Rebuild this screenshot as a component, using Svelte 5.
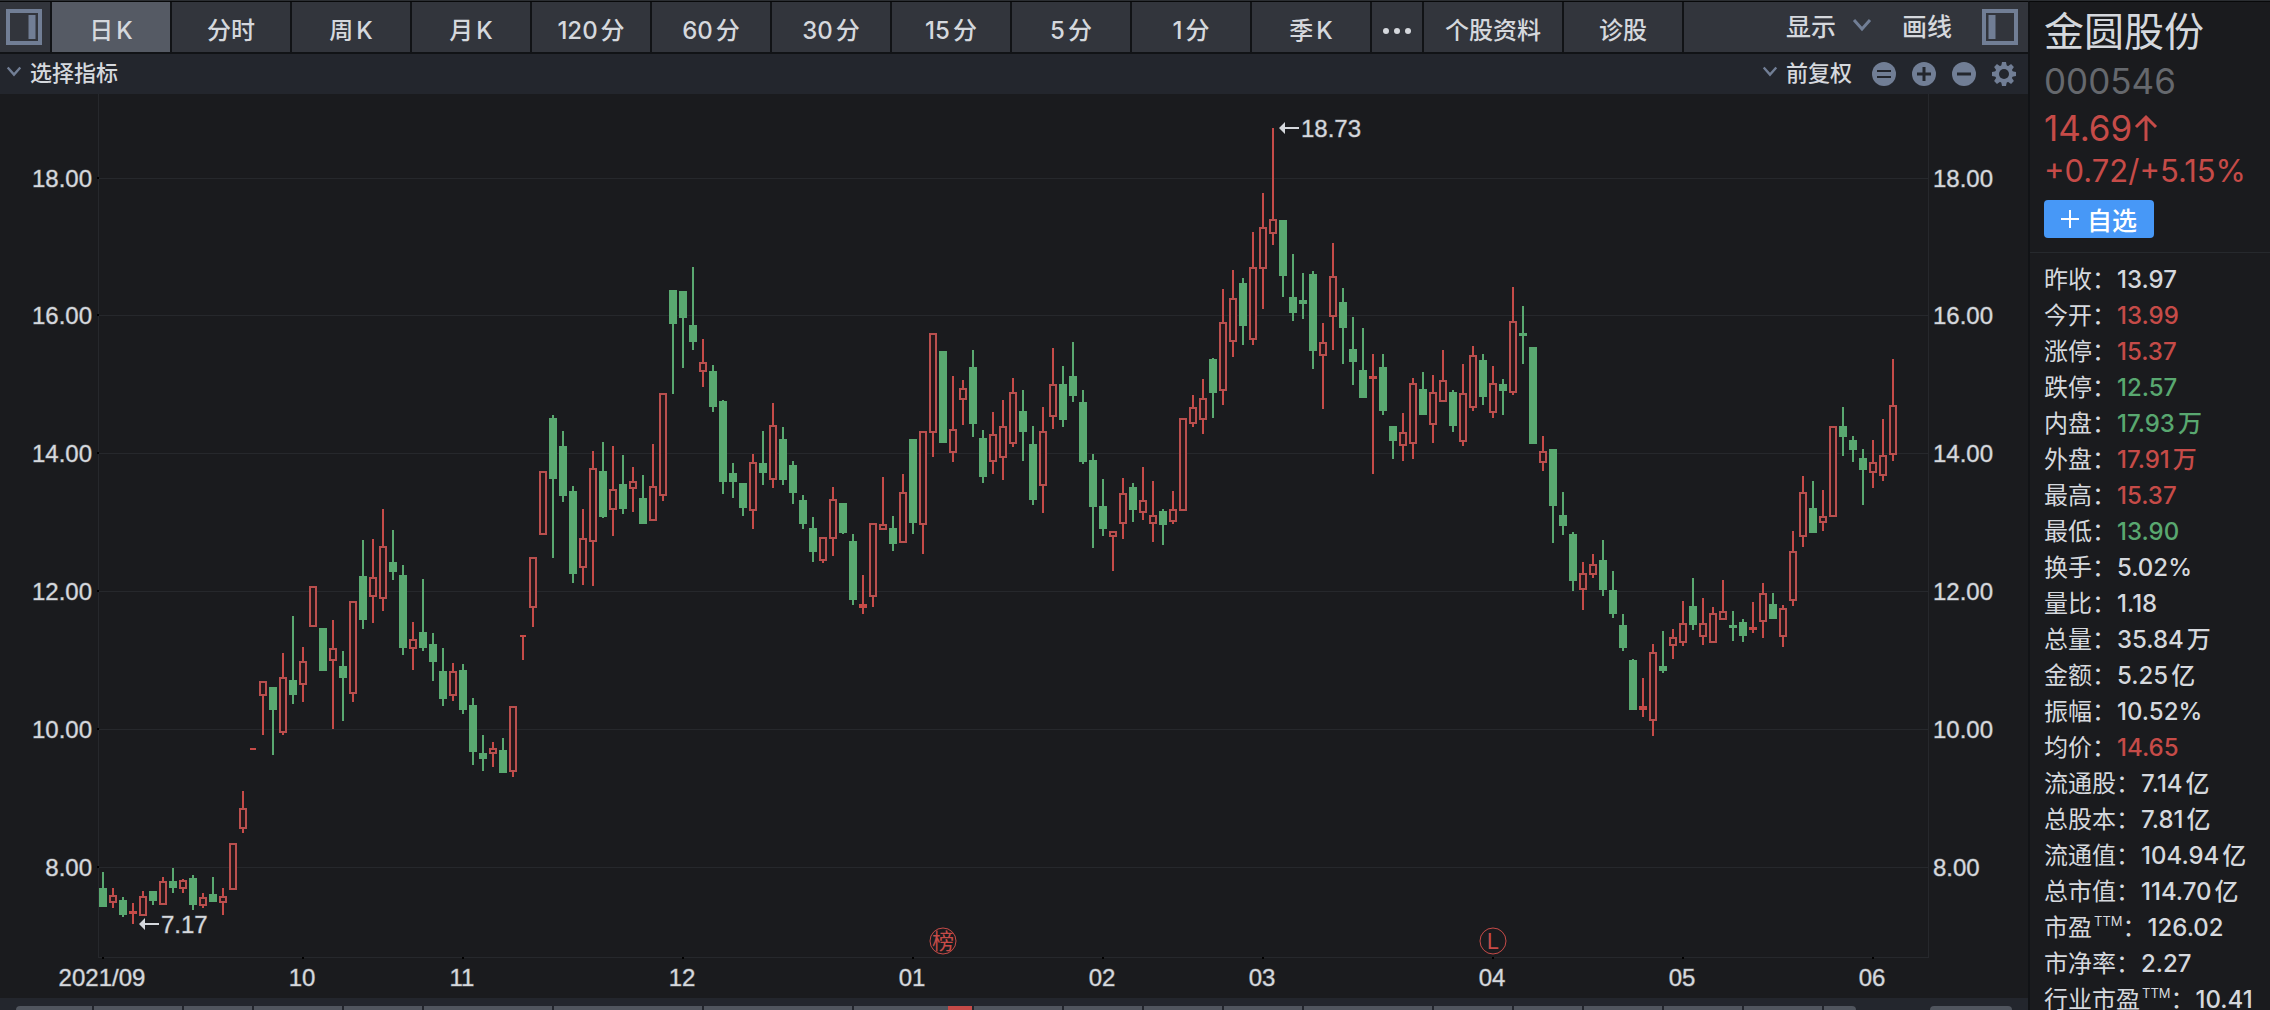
<script>
  const periods = ['日K', '分时', '周K', '月K', '120分', '60分', '30分', '15分', '5分', '1分', '季K'];
  let active = $state('日K');

  const quotes = [
    { label: '昨收', value: '13.97' },
    { label: '今开', value: '13.99', tone: 'up' },
    { label: '涨停', value: '15.37', tone: 'up' },
    { label: '跌停', value: '12.57', tone: 'down' },
    { label: '内盘', value: '17.93', unit: '万', tone: 'down' },
    { label: '外盘', value: '17.91', unit: '万', tone: 'up' },
    { label: '最高', value: '15.37', tone: 'up' },
    { label: '最低', value: '13.90', tone: 'down' },
    { label: '换手', value: '5.02%' },
    { label: '量比', value: '1.18' },
    { label: '总量', value: '35.84', unit: '万' },
    { label: '金额', value: '5.25', unit: '亿' },
    { label: '振幅', value: '10.52%' },
    { label: '均价', value: '14.65', tone: 'up' },
    { label: '流通股', value: '7.14', unit: '亿' },
    { label: '总股本', value: '7.81', unit: '亿' },
    { label: '流通值', value: '104.94', unit: '亿' },
    { label: '总市值', value: '114.70', unit: '亿' },
    { label: '市盈', ttm: true, value: '126.02' },
    { label: '市净率', value: '2.27' },
    { label: '行业市盈', ttm: true, value: '10.41' }
  ];

  const grid = [
    { text: '18.00', y: 178 },
    { text: '16.00', y: 315 },
    { text: '14.00', y: 453 },
    { text: '12.00', y: 591 },
    { text: '10.00', y: 729 },
    { text: '8.00', y: 867 }
  ];

  const months = [
    { text: '2021/09', x: 103 },
    { text: '10', x: 303 },
    { text: '11', x: 463 },
    { text: '12', x: 683 },
    { text: '01', x: 913 },
    { text: '02', x: 1103 },
    { text: '03', x: 1263 },
    { text: '04', x: 1493 },
    { text: '05', x: 1683 },
    { text: '06', x: 1873 }
  ];

  // One candle per entry: direction, high, body top, body bottom, low
  const series = `
    g872,888,907,907 r888,895,903,908 g897,900,915,917 r903,911,914,924 r891,896,916,916
    g891,891,901,905 r877,881,905,905 g868,881,888,893 r879,880,889,893 g875,878,905,910
    r893,897,906,908 g877,894,902,902 r888,896,903,915 r843,843,890,890 r791,808,829,833
    r748,748,750,750 r681,681,696,735 g687,687,710,755 r653,677,733,735 g616,680,695,704
    r647,661,685,702 r586,586,627,627 g628,628,671,671 r620,648,661,729 g651,666,678,721
    r601,601,694,702 g540,576,620,629 r539,577,597,623 r509,546,599,611 g530,562,572,580
    g565,575,648,655 r622,639,649,670 g579,632,648,651 g633,644,662,681 g648,671,699,706
    r663,671,696,701 g664,670,710,714 g698,705,752,765 g735,753,759,771 r742,748,754,767
    g738,750,773,773 r706,706,772,777 r635,635,637,660 r557,557,608,627 r471,471,535,535
    g415,418,479,558 g431,446,496,502 g486,491,574,583 r509,538,568,585 r451,468,542,586
    g442,471,517,518 r446,489,510,536 g455,484,509,514 r467,481,489,512 g475,498,524,524
    r444,486,521,521 r393,393,496,501 g290,290,324,394 g291,291,318,368 g267,325,342,350
    r339,362,372,387 g365,371,407,412 g400,401,482,494 g463,473,482,498 g483,483,508,516
    r454,462,511,529 g431,463,473,485 r403,425,480,488 g427,439,480,485 g461,465,493,504
    g495,500,524,529 g517,528,552,562 r537,537,561,563 r487,499,539,556 g503,503,533,534
    g534,541,600,605 r575,604,608,614 r523,523,597,607 r477,524,530,530 g516,528,544,551
    r474,492,543,543 g439,439,523,534 r431,431,525,554 r333,333,433,457 g351,351,443,443
    r376,429,453,462 r380,388,400,425 g350,367,424,437 g430,438,477,483 r412,434,462,474
    r400,426,458,480 r378,392,444,447 g390,411,432,461 g426,444,500,505 r407,431,486,513
    r348,384,417,429 g366,384,420,427 g342,376,396,402 g390,402,462,464 g454,460,507,548
    g479,506,529,536 r531,531,537,571 r478,493,524,539 g483,487,510,522 r467,500,513,520
    r481,515,524,542 g509,511,525,545 r491,509,522,524 r418,418,511,511 r395,407,424,427
    r379,398,420,434 g358,359,393,418 r289,322,391,405 r270,298,342,357 g278,283,326,345
    r232,267,340,345 r193,227,269,309 r128,219,234,245 g220,220,276,297 g254,297,313,321
    g273,300,304,319 g271,274,351,369 r323,342,356,409 r243,276,317,350 g288,302,328,364
    g317,349,362,385 g328,370,398,398 r354,376,379,474 g354,367,411,415 g426,426,441,459
    r413,432,446,461 r378,383,444,459 g372,389,415,415 r375,392,425,443 r350,380,402,402
    g390,392,426,432 r364,393,442,446 r346,355,408,411 g354,360,397,405 r366,383,413,418
    g379,384,391,415 r287,321,393,395 g306,333,336,364 g347,347,444,444 r436,451,463,471
    g449,449,506,543 g492,515,526,535 g532,534,581,591 r562,573,590,610 r554,564,575,578
    g540,560,590,596 g571,590,614,618 g614,625,648,651 g659,660,710,710 r678,706,710,717
    r644,652,721,736 g631,666,671,673 r629,637,646,659 r601,623,643,646 g578,606,625,630
    r598,623,637,645 r607,613,643,643 r580,611,620,620 g611,625,628,641 g619,622,636,642
    r602,627,630,633 r583,593,622,638 g593,604,619,619 r605,608,637,647 r531,551,601,606
    r476,492,537,547 g481,508,533,533 r490,516,523,531 r426,426,517,517 g407,426,437,456
    g436,440,450,462 g449,458,470,505 r440,462,473,488 r419,455,476,481 r359,405,455,461`;

  const candles = series.trim().split(/\s+/).map((entry, i) => {
    const [high, top, bottom, low] = entry.slice(1).split(',').map(Number);
    return { rise: entry[0] === 'r', x: 103 + i * 10, high, top, bottom, low };
  });

  const strip = [
    { w: 76 }, { w: 88 }, { w: 68 }, { w: 88 }, { w: 78 }, { w: 128 }, { w: 148 }, { w: 148 },
    { w: 118, alert: true }, { w: 88 }, { w: 78 }, { w: 78 }, { w: 78 }, { w: 128 }, { w: 78 },
    { w: 68 }, { w: 78 }, { w: 78 }, { w: 78 }, { w: 32 }
  ];
</script>

{#snippet chevron()}
  <svg class="chevron" viewBox="0 0 20 14" aria-hidden="true"><path d="M2 2l8 9 8-9" /></svg>
{/snippet}

<div class="page">
  <main class="main">
    <nav class="tabs">
      <button class="panel left" aria-label="左侧面板">
        <svg viewBox="0 0 36 36"><rect x="2" y="2" width="32" height="32" /><path d="M26 6v24" /></svg>
      </button>
      {#each periods as period}
        <button class="tab" class:active={active === period} onclick={() => (active = period)}>{period}</button>
      {/each}
      <button class="tab more" aria-label="更多">
        <svg viewBox="0 0 30 8"><circle cx="4" cy="4" r="3" /><circle cx="15" cy="4" r="3" /><circle cx="26" cy="4" r="3" /></svg>
      </button>
      <button class="tab wide">个股资料</button>
      <button class="tab">诊股</button>
      <div class="tools">
        <button class="tool">显示 {@render chevron()}</button>
        <button class="tool">画线</button>
        <button class="panel" aria-label="右侧面板">
          <svg viewBox="0 0 36 36"><rect x="2" y="2" width="32" height="32" /><path d="M10 6v24" /></svg>
        </button>
      </div>
    </nav>

    <div class="subbar">
      <button class="pick">{@render chevron()}选择指标</button>
      <div class="actions">
        <button class="pick">{@render chevron()}前复权</button>
        <button class="round" aria-label="重置">
          <svg viewBox="0 0 24 24"><circle cx="12" cy="12" r="12" /><path d="M5 9h14M5 15h14" /></svg>
        </button>
        <button class="round" aria-label="放大">
          <svg viewBox="0 0 24 24"><circle cx="12" cy="12" r="12" /><path class="thick" d="M5 12h14M12 5v14" /></svg>
        </button>
        <button class="round" aria-label="缩小">
          <svg viewBox="0 0 24 24"><circle cx="12" cy="12" r="12" /><path class="thick" d="M5 12h14" /></svg>
        </button>
        <button class="round" aria-label="设置">
          <svg viewBox="0 0 24 24">
            <g class="teeth">
              {#each [0, 45, 90, 135] as turn}
                <path d="M10 0h4l1 5v14l-1 5h-4l-1-5V5z" transform="rotate({turn} 12 12)" />
              {/each}
              <circle cx="12" cy="12" r="9" />
            </g>
            <circle class="hole" cx="12" cy="12" r="5" />
          </svg>
        </button>
      </div>
    </div>

    <svg class="chart" viewBox="0 94 2028 904" role="img" aria-label="日K走势">
      <g class="lines">
        {#each grid as line}
          <rect x="98" y={line.y} width="1830" height="1" />
        {/each}
        <rect x="98" y="94" width="1" height="864" />
        <rect x="1928" y="94" width="1" height="864" />
        <rect x="98" y="957" width="1831" height="1" />
      </g>
      <g class="ticks">
        {#each grid as line}
          <rect x="97" y={line.y - 1} width="2" height="2" />
        {/each}
        {#each months as month}
          <rect x={month.x - 1} y="957" width="2" height="2" />
        {/each}
      </g>
      {#each candles as c}
        <g class={c.rise ? 'rise' : 'fall'}>
          {#if c.bottom - c.top <= 2}
            <rect x={c.x - 3} y={c.top} width="6" height="2" />
            <rect x={c.x - 1} y={c.high} width="2" height={c.low - c.high} />
          {:else}
            <rect x={c.x - 1} y={c.high} width="2" height={c.low - c.high} />
            {#if c.rise && c.bottom - c.top > 4}
              <rect class="hollow" x={c.x - 3} y={c.top + 1} width="6" height={c.bottom - c.top - 2} />
            {:else}
              <rect x={c.x - 4} y={c.top} width="8" height={c.bottom - c.top} />
            {/if}
          {/if}
        </g>
      {/each}
      <g class="labels">
        {#each grid as line}
          <text class="end" x="92" y={line.y + 9}>{line.text}</text>
          <text x="1933" y={line.y + 9}>{line.text}</text>
        {/each}
        {#each months as month}
          <text class="mid" x={month.x - 1} y="986">{month.text}</text>
        {/each}
        <text x="161" y="933">7.17</text>
        <text x="1301" y="137">18.73</text>
      </g>
      <g class="arrows">
        <path d="M139 924l6-6v5h14v2h-14v5z" />
        <path d="M1279 128l6-6v5h14v2h-14v5z" />
      </g>
      <g class="events">
        <circle cx="943" cy="941" r="13" />
        <text x="943" y="949">榜</text>
        <circle cx="1493" cy="941" r="13" />
        <text x="1493" y="949">L</text>
      </g>
    </svg>

    <div class="strip">
      <div class="segments">
        {#each strip as seg}
          <span class="seg" class:alert={seg.alert} style:flex-grow={seg.w}></span>
        {/each}
      </div>
      <span class="seg extra"></span>
    </div>
  </main>

  <aside class="side">
    <header class="head">
      <h1>金圆股份</h1>
      <p class="code">000546</p>
      <p class="price">14.69<svg viewBox="0 0 24 28" aria-hidden="true"><path d="M12 27V3M2 13L12 3l10 10" /></svg></p>
      <p class="change">+0.72/+5.15%</p>
      <button class="add"><svg viewBox="0 0 18 18" aria-hidden="true"><path d="M9 0v18M0 9h18" /></svg>自选</button>
    </header>
    <dl class="quotes">
      {#each quotes as q}
        <div class="row">
          <dt>{q.label}{#if q.ttm}<sup>TTM</sup>{/if}：</dt>
          <dd class={q.tone}>{q.value}{#if q.unit}<span>{q.unit}</span>{/if}</dd>
        </div>
      {/each}
    </dl>
  </aside>
</div>

<style>
  :global(body) {
    background: #1a1b1e;
  }

  .page {
    display: flex;
    box-sizing: border-box;
    height: 100vh;
    overflow: hidden;
    border-top: 1px solid #2b2e32;
    background: #1a1b1e;
    color: #d5d8dd;
    font-family: Inter, 'Noto Sans CJK SC', sans-serif;
    font-size: 24px;
    font-weight: 500;
    text-autospace: normal;
  }

  button {
    display: flex;
    align-items: center;
    justify-content: center;
    margin: 0;
    padding: 0;
    border: 0;
    background: none;
    color: inherit;
    font: inherit;
    white-space: nowrap;
    cursor: pointer;
  }

  svg {
    display: block;
  }

  .main {
    display: flex;
    flex: 1;
    flex-direction: column;
    min-width: 0;
    border-top: 1px solid #08090a;
  }

  .tabs {
    display: flex;
    flex: none;
    height: 50px;
    border-bottom: 2px solid #111316;
    background: #32353c;
  }

  .panel svg {
    width: 36px;
    height: 36px;
    fill: none;
    stroke: #717e95;
    stroke-width: 4;
  }

  .panel path {
    stroke-width: 7;
  }

  .panel.left {
    box-sizing: border-box;
    width: 52px;
    padding-right: 2px;
    border-right: 2px solid #111316;
  }

  .tab {
    box-sizing: border-box;
    flex: 0 1 120px;
    padding-top: 2px;
    border-right: 2px solid #111316;
  }

  .tab.active {
    background: #555a64;
  }

  .tab.more {
    flex-basis: 52px;
  }

  .more svg {
    width: 30px;
    height: 8px;
    margin-top: 6px;
    fill: #d5d8dd;
  }

  .tab.wide {
    flex-basis: 140px;
  }

  .tools {
    display: flex;
    flex: 1;
    align-items: center;
    justify-content: flex-end;
    gap: 30px;
    padding-right: 10px;
  }

  .tool {
    gap: 16px;
    padding-bottom: 4px;
    font-size: 25px;
  }

  .chevron {
    width: 20px;
    height: 14px;
    fill: none;
    stroke: #717e95;
    stroke-width: 3;
  }

  .subbar {
    display: flex;
    flex: none;
    align-items: center;
    justify-content: space-between;
    box-sizing: border-box;
    height: 40px;
    padding: 0 12px 0 6px;
    background: #23262d;
    font-size: 22px;
  }

  .pick {
    gap: 8px;
    padding-bottom: 6px;
  }

  .pick .chevron {
    width: 16px;
    height: 11px;
  }

  .actions {
    display: flex;
    align-items: center;
    gap: 16px;
  }

  .actions .pick {
    margin-right: 4px;
  }

  .round svg {
    width: 24px;
    height: 24px;
    fill: #717e95;
  }

  .round > svg > path {
    fill: none;
    stroke: #23262d;
    stroke-width: 2;
  }

  .round > svg > .thick {
    stroke-width: 3;
  }

  .round .hole {
    fill: #23262d;
  }

  .chart {
    flex: 1;
    width: 100%;
    min-height: 0;
  }

  .lines {
    fill: #26282c;
  }

  .ticks {
    fill: #000;
  }

  .rise {
    fill: #c64b48;
  }

  .fall {
    fill: #59a870;
  }

  .hollow {
    fill: #26171a;
    stroke: #b94f4e;
    stroke-width: 2;
  }

  .labels {
    fill: #d5d8dd;
    stroke: #d5d8dd;
    stroke-opacity: 0.4;
    font-family: 'Liberation Sans', sans-serif;
    font-size: 24px;
    font-weight: 400;
  }

  .end {
    text-anchor: end;
  }

  .mid {
    text-anchor: middle;
  }

  .arrows {
    fill: #d5d8dd;
  }

  .events circle {
    fill: none;
    stroke: #c64b48;
  }

  .events text {
    fill: #c64b48;
    font-size: 22px;
    font-weight: 400;
    text-anchor: middle;
  }

  .strip {
    display: flex;
    flex: none;
    gap: 74px;
    box-sizing: border-box;
    height: 12px;
    padding: 8px 16px 0;
    background: #23262d;
  }

  .segments {
    display: flex;
    flex: 1;
    gap: 2px;
    overflow: hidden;
    border-radius: 8px 8px 0 0;
  }

  .seg {
    flex: 1 1 0;
    background: #50555e;
  }

  .alert {
    background: linear-gradient(to left, #c64b48 24px, #50555e 24px);
  }

  .extra {
    flex: 0 0 82px;
    border-radius: 8px 8px 0 0;
  }

  .side {
    box-sizing: border-box;
    flex: 0 0 242px;
    border-top: 1px solid #08090a;
    border-left: 2px solid #111316;
  }

  .head {
    padding: 6px 0 14px 14px;
    border-bottom: 1px solid #26292d;
    font-weight: 400;
  }

  h1,
  p,
  dl,
  dd {
    margin: 0;
  }

  h1 {
    font-size: 40px;
    font-weight: 400;
    line-height: 48px;
  }

  .code {
    color: #65686d;
    font-size: 35px;
    line-height: 50px;
  }

  .price {
    display: flex;
    align-items: center;
    gap: 2px;
    color: #c64b48;
    font-size: 35px;
    line-height: 44px;
  }

  .price svg {
    width: 24px;
    height: 28px;
    fill: none;
    stroke: #c64b48;
    stroke-width: 3;
  }

  .change {
    color: #c64b48;
    font-size: 31px;
    line-height: 42px;
  }

  .add {
    gap: 8px;
    width: 110px;
    height: 38px;
    margin-top: 8px;
    border-radius: 4px;
    background: #4798f7;
    color: #fff;
    font-size: 25px;
    font-weight: 500;
  }

  .add svg {
    width: 18px;
    height: 18px;
    fill: none;
    stroke: #fff;
    stroke-width: 2;
  }

  .quotes {
    padding: 9px 0 0 14px;
  }

  .row {
    display: flex;
    gap: 1px;
    height: 36px;
    line-height: 36px;
    white-space: nowrap;
  }

  dt {
    font-weight: 400;
  }

  .up {
    color: #c64b48;
  }

  .down {
    color: #59a870;
  }

  sup {
    display: inline-block;
    margin-left: 2px;
    font-size: 13px;
    line-height: 12px;
    vertical-align: 10px;
  }
</style>
